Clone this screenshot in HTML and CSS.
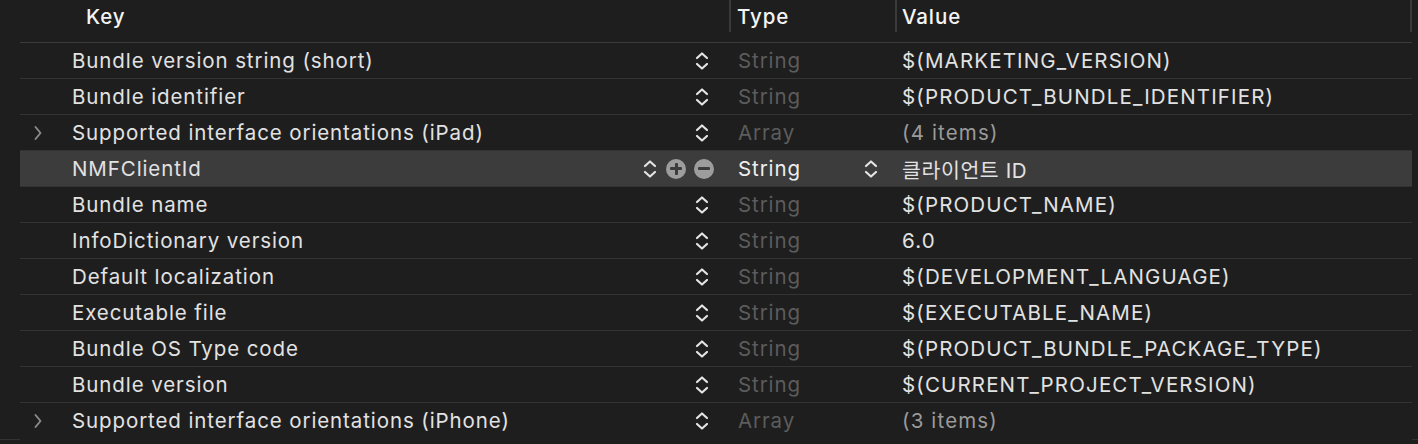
FILE: index.html
```html
<!DOCTYPE html>
<html>
<head>
<meta charset="utf-8">
<link rel="stylesheet" href="styles.css">
</head>
<body>
<svg width="0" height="0" class="defs">
  <defs>
    <symbol id="updown" viewBox="0 0 14 20">
      <path d="M2 7 L7 2.5 L12 7 M2 13 L7 17.5 L12 13" fill="none" stroke="currentColor" stroke-width="2.2" stroke-linecap="round" stroke-linejoin="round"/>
    </symbol>
    <symbol id="disc" viewBox="0 0 10 16">
      <path d="M2.5 2 L7.5 8 L2.5 14" fill="none" stroke="currentColor" stroke-width="1.9" stroke-linecap="round" stroke-linejoin="round"/>
    </symbol>
  </defs>
</svg>
<div class="plist">
  <div class="header">
    <div class="hcell hkey">Key</div>
    <div class="hcell htype">Type</div>
    <div class="hcell hvalue">Value</div>
  </div>
  <div class="rows">
    <div class="row">
      <div class="key"><span class="disc"></span><span class="ktext">Bundle version string (short)</span><span class="ctrl"><svg class="ud"><use href="#updown"/></svg></span></div>
      <div class="type dim">String</div>
      <div class="value">$(MARKETING_VERSION)</div>
    </div>
    <div class="row">
      <div class="key"><span class="disc"></span><span class="ktext">Bundle identifier</span><span class="ctrl"><svg class="ud"><use href="#updown"/></svg></span></div>
      <div class="type dim">String</div>
      <div class="value">$(PRODUCT_BUNDLE_IDENTIFIER)</div>
    </div>
    <div class="row">
      <div class="key"><span class="disc"><svg class="dicon"><use href="#disc"/></svg></span><span class="ktext">Supported interface orientations (iPad)</span><span class="ctrl"><svg class="ud"><use href="#updown"/></svg></span></div>
      <div class="type dim">Array</div>
      <div class="value muted">(4 items)</div>
    </div>
    <div class="row selected">
      <div class="key"><span class="disc"></span><span class="ktext">NMFClientId</span><span class="ctrl sel"><svg class="ud"><use href="#updown"/></svg><span class="circ plus"></span><span class="circ minus"></span></span></div>
      <div class="type typesel"><span>String</span><svg class="ud"><use href="#updown"/></svg></div>
      <div class="value kr">클라이언트 ID</div>
    </div>
    <div class="row">
      <div class="key"><span class="disc"></span><span class="ktext">Bundle name</span><span class="ctrl"><svg class="ud"><use href="#updown"/></svg></span></div>
      <div class="type dim">String</div>
      <div class="value">$(PRODUCT_NAME)</div>
    </div>
    <div class="row">
      <div class="key"><span class="disc"></span><span class="ktext">InfoDictionary version</span><span class="ctrl"><svg class="ud"><use href="#updown"/></svg></span></div>
      <div class="type dim">String</div>
      <div class="value">6.0</div>
    </div>
    <div class="row">
      <div class="key"><span class="disc"></span><span class="ktext">Default localization</span><span class="ctrl"><svg class="ud"><use href="#updown"/></svg></span></div>
      <div class="type dim">String</div>
      <div class="value">$(DEVELOPMENT_LANGUAGE)</div>
    </div>
    <div class="row">
      <div class="key"><span class="disc"></span><span class="ktext">Executable file</span><span class="ctrl"><svg class="ud"><use href="#updown"/></svg></span></div>
      <div class="type dim">String</div>
      <div class="value">$(EXECUTABLE_NAME)</div>
    </div>
    <div class="row">
      <div class="key"><span class="disc"></span><span class="ktext">Bundle OS Type code</span><span class="ctrl"><svg class="ud"><use href="#updown"/></svg></span></div>
      <div class="type dim">String</div>
      <div class="value">$(PRODUCT_BUNDLE_PACKAGE_TYPE)</div>
    </div>
    <div class="row">
      <div class="key"><span class="disc"></span><span class="ktext">Bundle version</span><span class="ctrl"><svg class="ud"><use href="#updown"/></svg></span></div>
      <div class="type dim">String</div>
      <div class="value">$(CURRENT_PROJECT_VERSION)</div>
    </div>
    <div class="row last">
      <div class="key"><span class="disc"><svg class="dicon"><use href="#disc"/></svg></span><span class="ktext">Supported interface orientations (iPhone)</span><span class="ctrl"><svg class="ud"><use href="#updown"/></svg></span></div>
      <div class="type dim">Array</div>
      <div class="value muted">(3 items)</div>
    </div>
  </div>
  <div class="footer"><span class="fseg"></span><span class="fgap"></span><span class="fseg fright"></span></div>
</div>
</body>
</html>
```

FILE: styles.css
```css
html, body {
  margin: 0;
  padding: 0;
  background: #1e1e1e;
}
body {
  width: 1418px;
  height: 444px;
  overflow: hidden;
  font-family: Inter, "Noto Sans", "Noto Sans CJK KR", sans-serif;
  font-size: 20.5px;
  letter-spacing: 0.9px;
  color: #e2e2e2;
}
.defs {
  position: absolute;
  width: 0;
  height: 0;
}
.plist {
  display: flex;
  flex-direction: column;
}
.header {
  display: grid;
  grid-template-columns: 709px 166px 517px;
  margin-left: 20px;
  width: 1392px;
  height: 42px;
  border-bottom: 1px solid #3b3b3b;
}
.hcell {
  height: 32px;
  display: flex;
  align-items: center;
  color: #f4f4f4;
  font-weight: 500;
}
.hkey {
  padding-left: 66px;
}
.htype {
  border-left: 2px solid #3a3a3a;
  padding-left: 6px;
}
.hvalue {
  border-left: 2px solid #3a3a3a;
  padding-left: 5px;
  border-right: 2px solid #3a3a3a;
}
.rows {
  display: flex;
  flex-direction: column;
  margin-left: 20px;
  width: 1392px;
}
.row {
  display: grid;
  grid-template-columns: 709px 166px 517px;
  height: 35px;
  border-bottom: 1px solid #333333;
  align-items: center;
}
.row.last {
  border-bottom-color: transparent;
}
.row.selected {
  background: #3c3c3c;
}
.key {
  display: flex;
  align-items: center;
  height: 35px;
}
.disc {
  width: 52px;
  display: flex;
  align-items: center;
  padding-left: 13px;
  box-sizing: border-box;
}
.dicon {
  width: 10px;
  height: 16px;
  color: #8c8c8c;
}
.ktext {
  flex: 1;
  white-space: nowrap;
}
.ctrl {
  display: flex;
  align-items: center;
  padding-right: 20px;
}
.ud {
  width: 14px;
  height: 20px;
  color: #e4e4e4;
}
.ctrl.sel {
  padding-right: 15px;
}
.ctrl.sel .ud {
  margin-right: 9px;
}
.circ {
  width: 20px;
  height: 20px;
  border-radius: 50%;
  background: #9d9d9d;
  position: relative;
}
.plus {
  margin-right: 8px;
}
.circ::before {
  content: "";
  position: absolute;
  left: 4px;
  top: 8.5px;
  width: 12px;
  height: 3px;
  border-radius: 1px;
  background: #3c3c3c;
}
.plus::after {
  content: "";
  position: absolute;
  left: 8.5px;
  top: 4px;
  width: 3px;
  height: 12px;
  border-radius: 1px;
  background: #3c3c3c;
}
.type {
  padding-left: 9px;
  white-space: nowrap;
}
.dim {
  color: #5c5c5c;
}
.typesel {
  display: flex;
  align-items: center;
  justify-content: space-between;
  padding-right: 17px;
  color: #eeeeee;
}
.value {
  padding-left: 7px;
  white-space: nowrap;
  letter-spacing: 1.15px;
}
.muted {
  color: #9a9a9a;
}
.value.kr {
  font-family: Inter, "Noto Sans CJK KR", sans-serif;
  letter-spacing: 0.6px;
}
.footer {
  display: flex;
  height: 1px;
}
.fseg {
  width: 20px;
  background: #333333;
}
.fgap {
  width: 1392px;
}
.fright {
  width: 6px;
}
```
